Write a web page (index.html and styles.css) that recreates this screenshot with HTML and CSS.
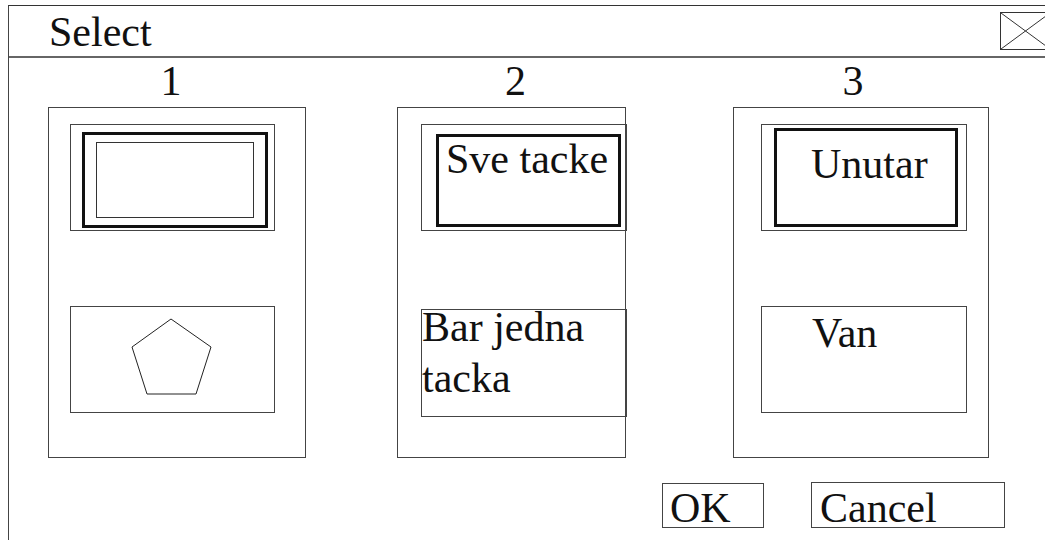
FILE: index.html
```html
<!DOCTYPE html>
<html lang="en">
<head>
    <meta charset="UTF-8">
    <meta name="viewport" content="width=device-width, initial-scale=1.0">
    <title>Select</title>
    <link rel="stylesheet" href="styles.css">
</head>
<body>
    <div class="dialog">
        <div class="titlebar">
            <span class="title">Select</span>
            <span class="close">
                <svg width="49" height="36" viewBox="0 0 49 36">
                    <line x1="0" y1="0" x2="49" y2="36" stroke="#333" stroke-width="1"/>
                    <line x1="0" y1="36" x2="49" y2="0" stroke="#333" stroke-width="1"/>
                </svg>
            </span>
        </div>

        <div class="columns">
            <div class="col col-1">
                <div class="num">1</div>
                <div class="panel">
                    <div class="box box-top">
                        <div class="thick">
                            <div class="thin"></div>
                        </div>
                    </div>
                    <div class="box">
                        <svg class="shape" width="203" height="105" viewBox="0 0 203 105">
                            <polygon points="100,12 140,40 125,87 76,87 61,40" fill="none" stroke="#222" stroke-width="1"/>
                        </svg>
                    </div>
                </div>
            </div>

            <div class="col col-2">
                <div class="num">2</div>
                <div class="panel">
                    <div class="box box-top">
                        <div class="thick">Sve tacke</div>
                    </div>
                    <div class="box box-low">
                        <div class="label">Bar jedna tacka</div>
                    </div>
                </div>
            </div>

            <div class="col col-3">
                <div class="num">3</div>
                <div class="panel">
                    <div class="box box-top">
                        <div class="thick">Unutar</div>
                    </div>
                    <div class="box">
                        <div class="label">Van</div>
                    </div>
                </div>
            </div>
        </div>

        <div class="actions">
            <span class="btn btn-ok">OK</span>
            <span class="btn btn-cancel">Cancel</span>
        </div>
    </div>
</body>
</html>
```

FILE: styles.css
```css
body {
    margin: 0;
    overflow: hidden;
    background-color: white;
    color: #111;
}
.dialog {
    margin: 5px 0 0 8px;
    width: 1042px;
    height: 535px;
    border-left: 1px solid #444;
    border-top: 1px solid #333;
    font-family: Tinos, "Liberation Serif", serif;
    font-size: 42px;
}
.titlebar {
    display: flex;
    align-items: flex-start;
    height: 50px;
    border-bottom: 2px solid #666;
}
.title {
    padding: 1px 0 0 40px;
    line-height: 50px;
}
.close {
    margin: 6px 0 0 auto;
    width: 49px;
    height: 36px;
    border: 1px solid #333;
}
.close svg {
    display: block;
}
.columns {
    display: flex;
    margin-left: 39px;
}
.col-1 {
    width: 258px;
}
.col-2 {
    width: 229px;
    margin-left: 91px;
}
.col-3 {
    width: 256px;
    margin-left: 107px;
}
.num {
    height: 49px;
    line-height: 46px;
    text-align: center;
    box-sizing: border-box;
}
.col-1 .num {
    padding-right: 12px;
}
.col-2 .num {
    padding-left: 8px;
}
.col-3 .num {
    padding-right: 16px;
}
.panel {
    height: 351px;
    box-sizing: border-box;
    border: 1px solid #444;
    display: flex;
    flex-direction: column;
    gap: 75px;
    padding-top: 16px;
}
.col-1 .panel {
    padding-left: 21px;
}
.col-2 .panel {
    padding-left: 23px;
}
.col-3 .panel {
    padding-left: 27px;
}
.box {
    width: 205px;
    height: 107px;
    box-sizing: border-box;
    border: 1px solid #444;
    flex-shrink: 0;
}
.col-2 .box, .col-3 .box {
    width: 206px;
}
.col-2 .box-low {
    margin-top: 3px;
    height: 108px;
}
.thick {
    box-sizing: border-box;
    border: 3px solid #111;
    line-height: 42px;
    white-space: nowrap;
}
.col-1 .thick {
    margin: 7px 0 0 11px;
    width: 186px;
    height: 96px;
}
.thin {
    margin: 7px 0 0 11px;
    width: 158px;
    height: 76px;
    box-sizing: border-box;
    border: 1px solid #333;
}
.col-2 .thick {
    margin: 9px 0 0 14px;
    width: 185px;
    height: 93px;
    padding: 1px 0 0 7px;
}
.col-3 .thick {
    margin: 3px 0 0 12px;
    width: 184px;
    height: 99px;
    padding: 12px 0 0 34px;
}
.shape {
    display: block;
}
.label {
    line-height: 51px;
}
.col-2 .label {
    margin-top: -8px;
}
.col-3 .label {
    line-height: 42px;
    padding: 5px 0 0 50px;
}
.actions {
    display: flex;
    align-items: flex-start;
    gap: 47px;
    margin-top: 24px;
    padding-left: 653px;
}
.btn {
    box-sizing: border-box;
    border: 1px solid #444;
    line-height: 40px;
    padding-top: 4px;
}
.btn-ok {
    margin-top: 1px;
    width: 102px;
    height: 45px;
    padding-left: 7px;
}
.btn-cancel {
    width: 194px;
    height: 46px;
    padding-top: 5px;
    padding-left: 8px;
}
```
